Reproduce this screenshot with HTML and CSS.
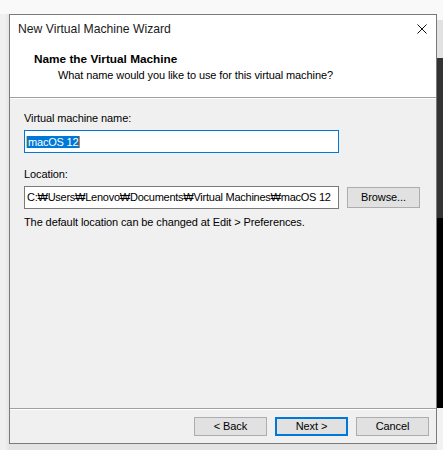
FILE: index.html
```html
<!DOCTYPE html>
<html>
<head>
<meta charset="utf-8">
<link rel="stylesheet" href="styles.css">
</head>
<body>
<div class="window">
  <div class="titlebar">
    <span class="title">New Virtual Machine Wizard</span>
    <svg class="close" width="10" height="10" viewBox="0 0 10 10"><path d="M0.5 0.5L9.5 9.5M9.5 0.5L0.5 9.5" stroke="#111" stroke-width="1" fill="none"/></svg>
  </div>
  <div class="header">
    <div class="h-title">Name the Virtual Machine</div>
    <div class="h-sub">What name would you like to use for this virtual machine?</div>
  </div>
  <div class="sep"></div>
  <div class="content">
    <div class="label">Virtual machine name:</div>
    <div class="input focused"><span class="sel">macOS 12</span><span class="caret"></span></div>
    <div class="label loc">Location:</div>
    <div class="row">
      <div class="input path">C:₩Users₩Lenovo₩Documents₩Virtual Machines₩macOS 12</div>
      <div class="btn browse">Browse...</div>
    </div>
    <div class="hint">The default location can be changed at Edit &gt; Preferences.</div>
  </div>
  <div class="sep"></div>
  <div class="footer">
    <div class="btn">&lt; Back</div>
    <div class="btn primary">Next &gt;</div>
    <div class="btn">Cancel</div>
  </div>
</div>
</body>
</html>
```

FILE: styles.css
```css
html, body {
  margin: 0;
  padding: 0;
}
body {
  width: 443px;
  height: 450px;
  overflow: hidden;
  font-family: "Liberation Sans", Arial, sans-serif;
  font-size: 11px;
  letter-spacing: -0.1px;
  color: #000;
  background:
    linear-gradient(to bottom, #f9f9f9 0 20px, #e2e2e2 20px 58px, #333 58px 218px, #000 218px 408px, #f2f2f2 408px) right top / 6px 100% no-repeat,
    linear-gradient(to bottom, #f9f9f9 0 14px, transparent 14px),
    linear-gradient(to right, #f0f0f0 0 5px, #e4e4e4 9px);
  padding: 14px 0 0 9px;
  box-sizing: border-box;
}
.window {
  width: 428px;
  height: 430px;
  border: 1px solid #7a7a7a;
  box-sizing: border-box;
  background: #f0f0f0;
  display: flex;
  flex-direction: column;
}
.titlebar {
  height: 32px;
  background: #fff;
  display: flex;
  justify-content: space-between;
  align-items: flex-start;
  padding: 6px 9px 0 8px;
  box-sizing: border-box;
}
.title {
  font-size: 12.2px;
  letter-spacing: 0;
  line-height: 16px;
  color: #1a1a1a;
}
.close {
  margin-top: 3px;
}
.header {
  height: 50px;
  background: #fff;
  padding-top: 4px;
  box-sizing: border-box;
}
.h-title {
  font-weight: bold;
  font-size: 11.8px;
  letter-spacing: 0;
  line-height: 16px;
  padding-left: 24px;
}
.h-sub {
  line-height: 16px;
  padding-left: 48px;
}
.sep {
  height: 1px;
  background: #a0a0a0;
  border-bottom: 1px solid #fff;
}
.content {
  flex: 1;
  padding: 12px 0 0 14px;
}
.label {
  line-height: 15px;
}
.label.loc {
  margin-top: 14px;
}
.input {
  box-sizing: border-box;
  width: 315px;
  height: 23px;
  border: 1px solid #7a7a7a;
  background: #fff;
  line-height: 19px;
  padding: 1px 2px;
  display: flex;
  align-items: center;
  white-space: nowrap;
  overflow: hidden;
}
.input.path {
  letter-spacing: -0.25px;
}
.input.focused {
  margin-top: 4px;
  border-color: #0078d7;
}
.sel {
  background: #0078d7;
  color: #fff;
  line-height: 12px;
  padding: 0 1px;
  letter-spacing: -0.2px;
  box-shadow: -1px 0 0 #e8c060;
}
.caret {
  width: 1px;
  height: 12px;
  background: #e87a1a;
}
.row {
  display: flex;
  align-items: flex-start;
  gap: 8px;
  margin-top: 4px;
}
.btn {
  box-sizing: border-box;
  width: 73px;
  height: 19px;
  border: 1px solid #adadad;
  background: #e1e1e1;
  display: flex;
  align-items: center;
  justify-content: center;
  line-height: 15px;
}
.browse {
  height: 21px;
  margin-top: 1px;
}
.hint {
  margin-top: 6px;
  line-height: 15px;
}
.footer {
  height: 33px;
  display: flex;
  justify-content: flex-end;
  align-items: flex-start;
  gap: 8px;
  padding: 7px 7px 0 0;
  box-sizing: border-box;
}
.btn.primary {
  border: 2px solid #0078d7;
}
```
